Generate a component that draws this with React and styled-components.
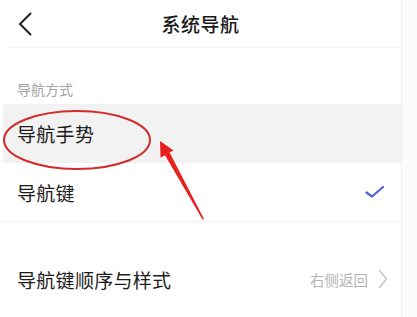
import React from "react";
import styled, { createGlobalStyle } from "styled-components";

const GlobalStyle = createGlobalStyle`
  html, body {
    margin: 0;
    padding: 0;
    background: #fbfbfb;
  }
  body {
    font-family: "Noto Sans CJK SC", "Noto Sans", sans-serif;
    color: #1c1c1c;
  }
`;

const Page = styled.div`
  position: relative;
  width: 417px;
  height: 317px;
  overflow: hidden;
  background: #fbfbfb;
`;

const Panel = styled.div`
  width: 401px;
  height: 100%;
  background: #ffffff;
  border-right: 1px solid #f0f0f0;
  display: flex;
  flex-direction: column;
`;

const Header = styled.header`
  height: 47px;
  margin-left: 7px;
  border-bottom: 1px solid #f3f3f3;
  display: grid;
  grid-template-columns: 40px 1fr 40px;
  align-items: center;
`;

const BackButton = styled.button`
  border: 0;
  background: none;
  padding: 0 0 0 11px;
  height: 47px;
  display: flex;
  align-items: center;
  cursor: pointer;
`;

const Title = styled.h1`
  margin: 0;
  text-align: center;
  font-size: 19px;
  font-weight: 500;
  color: #1a1a1a;
  letter-spacing: 0.5px;
  padding-right: 7px;
`;

const SectionLabel = styled.div`
  padding: 31px 0 5px 17px;
  font-size: 14px;
  line-height: 20px;
  color: #a3a3a3;
`;

const Row = styled.div`
  height: ${p => p.$height || 59}px;
  margin: ${p => p.$marginTop || 0}px 0 0 ${p => (p.$active ? 3 : 0)}px;
  padding: 0 0 0 ${p => (p.$active ? 14 : 17)}px;
  background: ${p => (p.$active ? "#f2f2f2" : "transparent")};
  border-bottom: ${p => (p.$divider ? "1px solid #f3f3f3" : "0")};
  display: flex;
  align-items: center;
  justify-content: space-between;
  box-sizing: border-box;
`;

const RowText = styled.span`
  font-size: 19px;
  color: #1c1c1c;
  letter-spacing: 0.3px;
`;

const Trail = styled.div`
  display: flex;
  align-items: center;
  gap: 10px;
  padding-right: 13px;
`;

const TrailText = styled.span`
  font-size: 14.5px;
  color: #b5b5b5;
`;

const Check = styled.div`
  padding-right: 16px;
  display: flex;
  align-items: center;
`;

const Annotation = styled.svg`
  position: absolute;
  left: 0;
  top: 0;
  pointer-events: none;
`;

export default function App() {
  return (
    <>
      <GlobalStyle />
      <Page>
        <Panel>
          <Header>
            <BackButton aria-label="返回">
              <svg width="14" height="24" viewBox="0 0 14 24">
                <path d="M12.5 1.5 L2 12 L12.5 22.5" fill="none" stroke="#222" strokeWidth="2" strokeLinecap="round" strokeLinejoin="round" />
              </svg>
            </BackButton>
            <Title>系统导航</Title>
            <span />
          </Header>

          <SectionLabel>导航方式</SectionLabel>

          <Row $active>
            <RowText>导航手势</RowText>
          </Row>
          <Row $divider>
            <RowText>导航键</RowText>
            <Check>
              <svg width="20" height="14" viewBox="0 0 20 14">
                <path d="M1.5 7.5 L7 11.5 L18 2" fill="none" stroke="#4b63d4" strokeWidth="2.2" strokeLinecap="round" strokeLinejoin="round" />
              </svg>
            </Check>
          </Row>

          <Row $marginTop={28} $height={58}>
            <RowText>导航键顺序与样式</RowText>
            <Trail>
              <TrailText>右侧返回</TrailText>
              <svg width="10" height="20" viewBox="0 0 10 20">
                <path d="M1.5 1.5 L8.5 10 L1.5 18.5" fill="none" stroke="#c4c4c4" strokeWidth="1.5" strokeLinecap="round" strokeLinejoin="round" />
              </svg>
            </Trail>
          </Row>
        </Panel>

        <Annotation width="417" height="317" viewBox="0 0 417 317">
          <ellipse cx="77" cy="140" rx="73" ry="29" fill="none" stroke="#d32a2a" strokeWidth="2" />
          <polygon
            points="160,141 173.5,150.5 169.6,152.6 204,219 202.5,219.5 165,155.2 160.5,157.8"
            fill="#e8201e"
          />
        </Annotation>
      </Page>
    </>
  );
}
